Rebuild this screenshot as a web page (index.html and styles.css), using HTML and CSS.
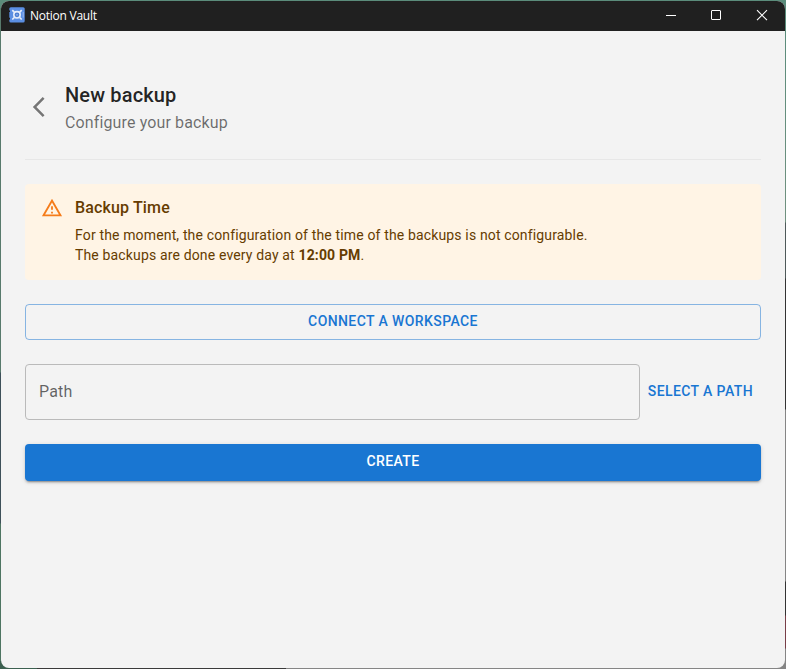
FILE: index.html
```html
<!DOCTYPE html>
<html lang="en">
<head>
<meta charset="utf-8">
<title>Notion Vault</title>
<link rel="stylesheet" href="styles.css">
</head>
<body>
<div class="window">
  <header class="titlebar">
    <svg class="app-icon" width="16" height="16" viewBox="0 0 16 16">
      <rect x=".3" y=".3" width="15.4" height="15.2" rx="1.5" fill="#5b8fe3"/>
      <path d="M0 4.2h1M0 11.6h1" stroke="#1d1d1d" stroke-width="1.6"/>
      <path d="M3.3 3.1l2 2M12.7 3.1l-2 2M3.3 12.5l2-2M12.7 12.5l-2-2" stroke="#e5edfa" stroke-width="1.7"/>
      <circle cx="8" cy="7.8" r="3.2" fill="#4c7fd2" stroke="#e5edfa" stroke-width="1.6"/>
      <circle cx="8" cy="7.8" r=".9" fill="#8fb2ee"/>
      <path d="M14.2 5v5.6" stroke="#a9c4ef" stroke-width=".8"/>
    </svg>
    <span class="app-name">Notion Vault</span>
    <div class="controls">
      <svg width="46" height="30" viewBox="0 0 46 30"><path d="M18 14.5h10" stroke="#fff"/></svg>
      <svg width="46" height="30" viewBox="0 0 46 30"><rect x="17.5" y="9.5" width="9" height="9" rx=".5" fill="none" stroke="#fff"/></svg>
      <svg width="46" height="30" viewBox="0 0 46 30"><path d="M17 9.2l10 10M27 9.2l-10 10" stroke="#fff" stroke-width="1.1"/></svg>
    </div>
  </header>
  <main class="content">
    <div class="heading">
      <svg class="back" width="24" height="24" viewBox="0 0 24 24"><path fill="#757575" d="M17.51 3.87L15.73 2.1 5.84 12l9.9 9.9 1.77-1.77L9.38 12z"/></svg>
      <div>
        <h1 class="title">New backup</h1>
        <p class="subtitle">Configure your backup</p>
      </div>
    </div>
    <div class="alert">
      <svg class="alert-icon" width="22" height="22" viewBox="0 0 24 24"><path fill="#f57c1b" d="M12 5.99L19.53 19H4.47L12 5.99M12 2L1 21h22L12 2zm1 14h-2v2h2v-2zm0-6h-2v4h2v-4z"/></svg>
      <div class="message">
        <div class="alert-title">Backup Time</div>
        For the moment, the configuration of the time of the backups is not configurable.<br>
        The backups are done every day at <strong>12:00 PM</strong>.
      </div>
    </div>
    <button class="button outlined">CONNECT A WORKSPACE</button>
    <div class="path-row">
      <div class="field">Path</div>
      <button class="button text">SELECT A PATH</button>
    </div>
    <button class="button contained">CREATE</button>
  </main>
</div>
</body>
</html>
```
FILE: styles.css
```css
* { box-sizing: border-box; }

body {
  margin: 0;
  height: 669px;
  padding: 1px;
  overflow: hidden;
  font-family: Roboto, sans-serif;
  background:
    linear-gradient(#5b8c7b, #5b8c7b) top / 100% 8px no-repeat,
    linear-gradient(#3c6050 0 0) 0 100% / 37px 8px no-repeat,
    linear-gradient(90deg, #3a3a3a 286px, #858585 286px) bottom / 100% 8px no-repeat,
    linear-gradient(#587a6c 372px, #3d5059 373px 523px, #4e7562 524px) left / 8px 100% no-repeat,
    linear-gradient(#5b8c7b 30px, #70917f 222px, #4f5a5a 223px 278px, #333 279px 409px, #858585 410px 581px, #333 582px 615px, #783e48 616px 648px, #858585 649px) right / 8px 100% no-repeat,
    #587a6c;
}

.window {
  height: 667px;
  border-radius: 8px;
  overflow: hidden;
  background: #f3f3f3;
}

.titlebar {
  display: flex;
  align-items: center;
  height: 30px;
  padding-left: 8px;
  background: #202020;
}

.app-icon { margin-top: -2px; }

.app-name {
  margin-left: 5px;
  color: #fff;
  font: 12px/16px "Open Sans", sans-serif;
  letter-spacing: -0.25px;
}

.controls {
  display: flex;
  margin-left: auto;
  padding-left: 1px;
  margin-right: -1px;
}

.controls svg { display: block; }

.content {
  display: flex;
  flex-direction: column;
  padding: 48px 24px 0;
}

.heading {
  display: flex;
  align-items: center;
  height: 81px;
  margin-bottom: 24px;
  padding-bottom: 25px;
  border-bottom: 1px solid #e7e7e7;
}

.back { margin: 0 14px 0 2px; }

.title {
  margin: 0;
  color: rgba(0, 0, 0, 0.87);
  font-size: 20px;
  font-weight: 500;
  line-height: 32px;
  letter-spacing: 0.15px;
}

.subtitle {
  margin: 0;
  color: rgba(0, 0, 0, 0.57);
  font-size: 16px;
  line-height: 23px;
  letter-spacing: 0.13px;
}

.alert {
  display: flex;
  margin-bottom: 24px;
  padding: 6px 16px;
  border-radius: 4px;
  background: #fff4e5;
  color: #663c00;
  font-size: 14px;
  line-height: 1.43;
  letter-spacing: 0.15px;
}

.alert-icon {
  margin: 7px 12px 0 0;
}

.message { padding: 8px 0 9px; }

.alert-title {
  margin: -2px 0 4.6px;
  font-size: 16px;
  font-weight: 500;
  line-height: 24px;
}

.button {
  height: 36.5px;
  padding: 0 8px 2px;
  border: 0;
  border-radius: 4px;
  background: none;
  color: #1976d2;
  font: 500 14px/24.5px Roboto, sans-serif;
  letter-spacing: 0.4px;
  white-space: nowrap;
}

.outlined { border: 1px solid rgba(25, 118, 210, 0.5); }

.path-row {
  display: flex;
  align-items: center;
  margin: 24px 0;
}

.field {
  flex: 1;
  height: 56px;
  padding: 0 13px;
  border: 1px solid #bababa;
  border-radius: 4px;
  color: rgba(0, 0, 0, 0.6);
  font-size: 16px;
  line-height: 54px;
  letter-spacing: 0.15px;
}

.contained {
  background: #1976d2;
  color: #fff;
  box-shadow: 0 3px 1px -2px rgba(0, 0, 0, 0.2), 0 2px 2px rgba(0, 0, 0, 0.14), 0 1px 5px rgba(0, 0, 0, 0.12);
}
```
